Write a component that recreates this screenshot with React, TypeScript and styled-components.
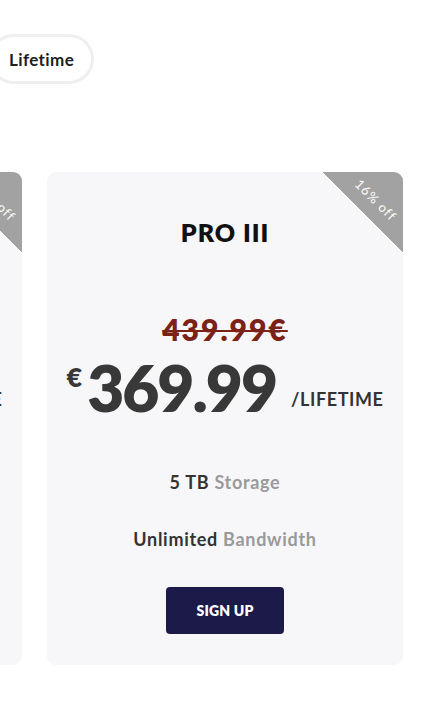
import React from "react";
import styled, { createGlobalStyle } from "styled-components";

const Global = createGlobalStyle`
  html, body { margin: 0; padding: 0; background: #ffffff; overflow: hidden; }
  body { font-family: "Lato", "Open Sans", sans-serif; }
`;

const Page = styled.div`
  width: 447px;
  height: 703px;
  overflow: hidden;
  padding-top: 34px;
  box-sizing: border-box;
`;

const ToggleRow = styled.div`
  display: flex;
  margin-left: -11px;
`;

const Pill = styled.div`
  height: 50px;
  box-sizing: border-box;
  border: 3px solid #efefef;
  border-radius: 25px;
  background: #fff;
  display: flex;
  align-items: center;
  padding: 0 17px;
  font-weight: 700;
  font-size: 17px;
  color: #1e1e1e;
  letter-spacing: 0.4px;
`;

const CardsRow = styled.div`
  display: flex;
  gap: 25px;
  margin-top: 88px;
  margin-left: -334px;
`;

const Card = styled.div`
  position: relative;
  flex: 0 0 356px;
  height: 493px;
  box-sizing: border-box;
  background: #f7f7f9;
  border-radius: 9px;
  overflow: hidden;
  display: flex;
  flex-direction: column;
  align-items: center;
  padding-top: 45px;
`;

const Corner = styled.div`
  position: absolute;
  top: 0;
  right: 0;
  width: 80px;
  height: 80px;
  background: linear-gradient(45deg, transparent 50%, #a2a2a2 50%);
`;

const CornerText = styled.span`
  position: absolute;
  top: 20px;
  right: -11px;
  width: 76px;
  text-align: center;
  transform: rotate(45deg);
  color: #fff;
  font-size: 13px;
  font-weight: 400;
  letter-spacing: 1px;
`;

const Title = styled.div`
  font-size: 25px;
  line-height: 30px;
  font-weight: 800;
  color: #111;
  letter-spacing: 1px;
`;

const OldPrice = styled.div`
  margin-top: 65px;
  font-size: 30px;
  line-height: 34px;
  font-weight: 800;
  color: #7b2116;
  text-decoration: line-through;
  text-decoration-thickness: 2px;
  letter-spacing: 2px;
`;

const PriceRow = styled.div`
  margin-top: 10px;
  display: flex;
  align-items: flex-start;
  height: 64px;
  color: #383838;
`;

const Currency = styled.span`
  font-size: 27px;
  font-weight: 800;
  line-height: 28px;
  margin-top: 7px;
  margin-right: 5px;
`;

const Amount = styled.span`
  font-size: 64px;
  font-weight: 800;
  line-height: 64px;
  letter-spacing: -2px;
`;

const Period = styled.span`
  align-self: center;
  margin-left: 15px;
  margin-top: 22px;
  font-size: 18px;
  font-weight: 700;
  color: #333;
  letter-spacing: 0.6px;
`;

const Feature = styled.div<{ $gap: number }>`
  margin-top: ${(p) => p.$gap}px;
  font-size: 18px;
  line-height: 22px;
  font-weight: 700;
  color: #333;
  letter-spacing: 0.7px;
`;

const Muted = styled.span`
  color: #9a9a9a;
`;

const Button = styled.button`
  margin-top: 37px;
  width: 118px;
  height: 47px;
  border: none;
  border-radius: 4px;
  background: #1c1a48;
  color: #fff;
  font-family: inherit;
  font-size: 14px;
  font-weight: 800;
  letter-spacing: 0.2px;
`;

type Plan = {
  name: string;
  old: string;
  price: string;
  off: string;
  storage: string;
};

const plans: Plan[] = [
  { name: "PRO II", old: "239.99€", price: "199.99", off: "17% off", storage: "2 TB" },
  { name: "PRO III", old: "439.99€", price: "369.99", off: "16% off", storage: "5 TB" },
];

function PlanCard({ plan }: { plan: Plan }) {
  return (
    <Card>
      <Corner>
        <CornerText>{plan.off}</CornerText>
      </Corner>
      <Title>{plan.name}</Title>
      <OldPrice>{plan.old}</OldPrice>
      <PriceRow>
        <Currency>€</Currency>
        <Amount>{plan.price}</Amount>
        <Period>/LIFETIME</Period>
      </PriceRow>
      <Feature $gap={51}>
        {plan.storage} <Muted>Storage</Muted>
      </Feature>
      <Feature $gap={35}>
        Unlimited <Muted>Bandwidth</Muted>
      </Feature>
      <Button>SIGN UP</Button>
    </Card>
  );
}

export default function App() {
  return (
    <Page>
      <Global />
      <ToggleRow>
        <Pill>Lifetime</Pill>
      </ToggleRow>
      <CardsRow>
        {plans.map((p) => (
          <PlanCard key={p.name} plan={p} />
        ))}
      </CardsRow>
    </Page>
  );
}
